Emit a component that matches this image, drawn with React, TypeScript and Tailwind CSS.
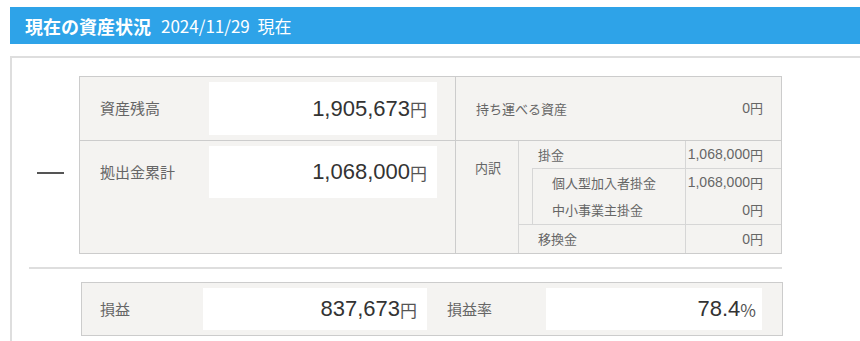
const JP = "font-['Noto_Sans_CJK_JP','Noto_Sans',sans-serif]";
const NUM = "font-['Liberation_Sans','Noto_Sans_CJK_JP',sans-serif]";

function BigValue({ value, unit, className = '' }: { value: string; unit: string; className?: string }) {
  return (
    <div className={`bg-white flex items-center justify-end ${className}`}>
      <span className={`${NUM} text-[22px] text-[#333] leading-none`}>{value}</span>
      <span className={`${JP} text-[17px] text-[#555] leading-none`}>{unit}</span>
    </div>
  );
}

function SubRow({ label, value, h }: { label: string; value: string; h: string }) {
  return (
    <div className={`flex ${h}`}>
      <div className="flex-1 flex items-center pl-[19px]">{label}</div>
      <div className="w-[96px] border-l border-[#d6d6d6] flex items-center justify-end pr-[18px]">
        <span className={`${NUM} text-[14px]`}>{value}</span>
        <span>円</span>
      </div>
    </div>
  );
}

export default function App() {
  return (
    <div className={`w-[860px] h-[341px] overflow-hidden bg-white pt-[7px] pl-[10px] ${JP}`}>
      {/* ── ヘッダー ── */}
      <div className="h-[37px] bg-[#2ea3e8] flex items-center pl-[15px] text-white gap-[10px]">
        <span className="text-[18px] font-bold leading-none">現在の資産状況</span>
        <span className="text-[17px] leading-none">2024/11/29&nbsp;&nbsp;現在</span>
      </div>

      {/* ── 本体 ── */}
      <div className="mt-[12px] border-t-2 border-l-2 border-[#dedede] pt-[18px] pb-[20px]">
        <div className="flex">
          <div className="w-[67px] pl-[25px] pt-[96px]">
            <div className="w-[27px] h-[2px] bg-[#555]" />
          </div>

          <div className="w-[703px] border border-[#cccccc] bg-[#f4f3f1] text-[#666]">
            {/* 1行目 */}
            <div className="flex h-[64px] border-b border-[#cccccc]">
              <div className="w-[376px] border-r border-[#cccccc] flex items-center pl-[20px]">
                <div className="w-[109px] text-[15px]">資産残高</div>
                <BigValue value="1,905,673" unit="円" className="w-[228px] h-[53px] pr-[10px]" />
              </div>
              <div className="flex-1 flex items-center justify-between pl-[20px] pr-[18px] text-[13px]">
                <span>持ち運べる資産</span>
                <span><span className={`${NUM} text-[14px]`}>0</span>円</span>
              </div>
            </div>

            {/* 2行目 */}
            <div className="flex h-[112px]">
              <div className="w-[376px] border-r border-[#cccccc] pl-[20px] pt-[5px]">
                <div className="flex items-center">
                  <div className="w-[109px] text-[15px]">拠出金累計</div>
                  <BigValue value="1,068,000" unit="円" className="w-[228px] h-[52px] pr-[10px]" />
                </div>
              </div>
              <div className="flex-1 flex text-[13px]">
                <div className="w-[63px] border-r border-[#d6d6d6] pl-[19px] pt-[18px] leading-[17px]">内訳</div>
                <div className="flex-1 flex flex-col">
                  <SubRow label="掛金" value="1,068,000" h="h-[27px]" />
                  <div className="ml-[13px] border-t border-l border-[#d6d6d6]">
                    <SubRow label="個人型加入者掛金" value="1,068,000" h="h-[27px]" />
                    <SubRow label="中小事業主掛金" value="0" h="h-[28px]" />
                  </div>
                  <div className="border-t border-[#d6d6d6]">
                    <SubRow label="移換金" value="0" h="h-[28px]" />
                  </div>
                </div>
              </div>
            </div>
          </div>
        </div>

        {/* 区切り線 */}
        <div className="ml-[17px] mt-[13px] w-[753px] h-[2px] bg-[#dedede]" />

        {/* 損益 */}
        <div className="ml-[69px] mt-[13px] w-[702px] h-[54px] border border-[#cccccc] bg-[#f4f3f1] flex items-center text-[#666] text-[15px]">
          <div className="w-[121px] pl-[18px]">損益</div>
          <BigValue value="837,673" unit="円" className="w-[224px] h-[42px] pr-[10px]" />
          <div className="w-[119px] pl-[20px]">損益率</div>
          <BigValue value="78.4" unit="%" className="w-[216px] h-[42px] pr-[6px]" />
        </div>
      </div>
    </div>
  );
}
